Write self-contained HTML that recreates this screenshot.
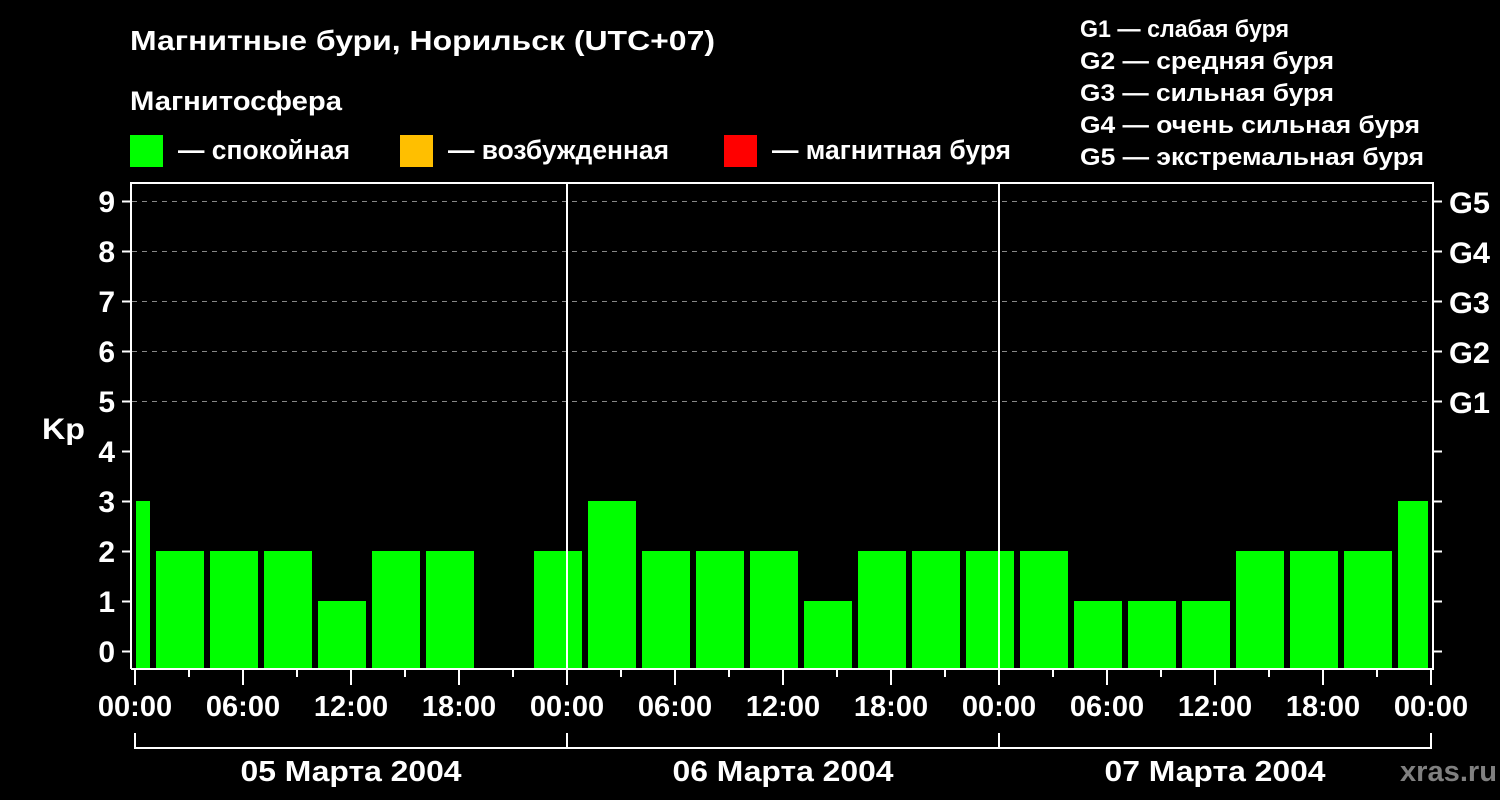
<!DOCTYPE html>
<html><head><meta charset="utf-8"><style>
html,body{margin:0;padding:0;background:#000;}
svg{display:block;font-family:"Liberation Sans","DejaVu Sans",sans-serif;font-weight:bold;}
</style></head><body>
<svg width="1500" height="800" viewBox="0 0 1500 800" xmlns="http://www.w3.org/2000/svg">
<rect width="1500" height="800" fill="#000"/>
<g fill="#fff">
<text x="130" y="50" font-size="28" textLength="585" lengthAdjust="spacingAndGlyphs">Магнитные бури, Норильск (UTC+07)</text>
<text x="130" y="110" font-size="27" textLength="212" lengthAdjust="spacingAndGlyphs">Магнитосфера</text>
<text x="178" y="159" font-size="27" textLength="172" lengthAdjust="spacingAndGlyphs">— спокойная</text>
<text x="448" y="159" font-size="27" textLength="221" lengthAdjust="spacingAndGlyphs">— возбужденная</text>
<text x="772" y="159" font-size="27" textLength="239" lengthAdjust="spacingAndGlyphs">— магнитная буря</text>
<g font-size="24">
<text x="1080" y="37" textLength="209" lengthAdjust="spacingAndGlyphs">G1 — слабая буря</text>
<text x="1080" y="69" textLength="254" lengthAdjust="spacingAndGlyphs">G2 — средняя буря</text>
<text x="1080" y="101" textLength="254" lengthAdjust="spacingAndGlyphs">G3 — сильная буря</text>
<text x="1080" y="133" textLength="340" lengthAdjust="spacingAndGlyphs">G4 — очень сильная буря</text>
<text x="1080" y="165" textLength="344" lengthAdjust="spacingAndGlyphs">G5 — экстремальная буря</text>
</g>
</g>
<rect x="130" y="135" width="33" height="32" fill="#00ff00"/>
<rect x="400" y="135" width="33" height="32" fill="#ffbf00"/>
<rect x="724" y="135" width="33" height="32" fill="#ff0000"/>

<g stroke="#888" stroke-width="1" stroke-dasharray="5,5">
<line x1="132" y1="201.5" x2="1432" y2="201.5"/>
<line x1="132" y1="251.5" x2="1432" y2="251.5"/>
<line x1="132" y1="301.5" x2="1432" y2="301.5"/>
<line x1="132" y1="351.5" x2="1432" y2="351.5"/>
<line x1="132" y1="401.5" x2="1432" y2="401.5"/>
</g>

<g fill="#00ff00">
<rect x="136" y="501" width="14" height="167"/>
<rect x="156" y="551" width="48" height="117"/>
<rect x="210" y="551" width="48" height="117"/>
<rect x="264" y="551" width="48" height="117"/>
<rect x="318" y="601" width="48" height="67"/>
<rect x="372" y="551" width="48" height="117"/>
<rect x="426" y="551" width="48" height="117"/>
<rect x="534" y="551" width="48" height="117"/>
<rect x="588" y="501" width="48" height="167"/>
<rect x="642" y="551" width="48" height="117"/>
<rect x="696" y="551" width="48" height="117"/>
<rect x="750" y="551" width="48" height="117"/>
<rect x="804" y="601" width="48" height="67"/>
<rect x="858" y="551" width="48" height="117"/>
<rect x="912" y="551" width="48" height="117"/>
<rect x="966" y="551" width="48" height="117"/>
<rect x="1020" y="551" width="48" height="117"/>
<rect x="1074" y="601" width="48" height="67"/>
<rect x="1128" y="601" width="48" height="67"/>
<rect x="1182" y="601" width="48" height="67"/>
<rect x="1236" y="551" width="48" height="117"/>
<rect x="1290" y="551" width="48" height="117"/>
<rect x="1344" y="551" width="48" height="117"/>
<rect x="1398" y="501" width="30" height="167"/>
</g>

<g stroke="#fff" stroke-width="2" fill="none">
<path d="M131 669 V183 H1433 V669 H131"/>
<line x1="567" y1="183" x2="567" y2="668"/>
<line x1="999" y1="183" x2="999" y2="668"/>
</g>
<g stroke="#fff" stroke-width="2">
<line x1="122" y1="201.5" x2="131" y2="201.5"/><line x1="122" y1="251.5" x2="131" y2="251.5"/>
<line x1="122" y1="301.5" x2="131" y2="301.5"/><line x1="122" y1="351.5" x2="131" y2="351.5"/>
<line x1="122" y1="401.5" x2="131" y2="401.5"/><line x1="122" y1="451.5" x2="131" y2="451.5"/>
<line x1="122" y1="501.5" x2="131" y2="501.5"/><line x1="122" y1="551.5" x2="131" y2="551.5"/>
<line x1="122" y1="601.5" x2="131" y2="601.5"/><line x1="122" y1="651.5" x2="131" y2="651.5"/>
<line x1="1433" y1="201.5" x2="1442" y2="201.5"/><line x1="1433" y1="251.5" x2="1442" y2="251.5"/>
<line x1="1433" y1="301.5" x2="1442" y2="301.5"/><line x1="1433" y1="351.5" x2="1442" y2="351.5"/>
<line x1="1433" y1="401.5" x2="1442" y2="401.5"/><line x1="1433" y1="451.5" x2="1442" y2="451.5"/>
<line x1="1433" y1="501.5" x2="1442" y2="501.5"/><line x1="1433" y1="551.5" x2="1442" y2="551.5"/>
<line x1="1433" y1="601.5" x2="1442" y2="601.5"/><line x1="1433" y1="651.5" x2="1442" y2="651.5"/>
<line x1="135" y1="669" x2="135" y2="685"/><line x1="243" y1="669" x2="243" y2="685"/>
<line x1="351" y1="669" x2="351" y2="685"/><line x1="459" y1="669" x2="459" y2="685"/>
<line x1="567" y1="669" x2="567" y2="685"/><line x1="675" y1="669" x2="675" y2="685"/>
<line x1="783" y1="669" x2="783" y2="685"/><line x1="891" y1="669" x2="891" y2="685"/>
<line x1="999" y1="669" x2="999" y2="685"/><line x1="1107" y1="669" x2="1107" y2="685"/>
<line x1="1215" y1="669" x2="1215" y2="685"/><line x1="1323" y1="669" x2="1323" y2="685"/>
<line x1="1431" y1="669" x2="1431" y2="685"/>
<line x1="189" y1="669" x2="189" y2="677"/><line x1="297" y1="669" x2="297" y2="677"/>
<line x1="405" y1="669" x2="405" y2="677"/><line x1="513" y1="669" x2="513" y2="677"/>
<line x1="621" y1="669" x2="621" y2="677"/><line x1="729" y1="669" x2="729" y2="677"/>
<line x1="837" y1="669" x2="837" y2="677"/><line x1="945" y1="669" x2="945" y2="677"/>
<line x1="1053" y1="669" x2="1053" y2="677"/><line x1="1161" y1="669" x2="1161" y2="677"/>
<line x1="1269" y1="669" x2="1269" y2="677"/><line x1="1377" y1="669" x2="1377" y2="677"/>
<path d="M135 733 V748 H1431 V733" fill="none"/>
<line x1="567" y1="733" x2="567" y2="748"/><line x1="999" y1="733" x2="999" y2="748"/>
</g>

<g fill="#fff" font-size="30" text-anchor="end">
<text x="115" y="212">9</text><text x="115" y="262">8</text><text x="115" y="312">7</text>
<text x="115" y="362">6</text><text x="115" y="412">5</text><text x="115" y="462">4</text>
<text x="115" y="512">3</text><text x="115" y="562">2</text><text x="115" y="612">1</text>
<text x="115" y="662">0</text>
</g>
<text x="42" y="439" fill="#fff" font-size="30" textLength="43" lengthAdjust="spacingAndGlyphs">Kp</text>
<g fill="#fff" font-size="30">
<text x="1449" y="213" textLength="41" lengthAdjust="spacingAndGlyphs">G5</text><text x="1449" y="263" textLength="41" lengthAdjust="spacingAndGlyphs">G4</text><text x="1449" y="313" textLength="41" lengthAdjust="spacingAndGlyphs">G3</text>
<text x="1449" y="363" textLength="41" lengthAdjust="spacingAndGlyphs">G2</text><text x="1449" y="413" textLength="41" lengthAdjust="spacingAndGlyphs">G1</text>
</g>
<g fill="#fff" font-size="29" text-anchor="middle">
<text x="135" y="716">00:00</text><text x="243" y="716">06:00</text><text x="351" y="716">12:00</text>
<text x="459" y="716">18:00</text><text x="567" y="716">00:00</text><text x="675" y="716">06:00</text>
<text x="783" y="716">12:00</text><text x="891" y="716">18:00</text><text x="999" y="716">00:00</text>
<text x="1107" y="716">06:00</text><text x="1215" y="716">12:00</text><text x="1323" y="716">18:00</text>
<text x="1431" y="716">00:00</text>
<text x="351" y="781" textLength="221" lengthAdjust="spacingAndGlyphs">05 Марта 2004</text>
<text x="783" y="781" textLength="221" lengthAdjust="spacingAndGlyphs">06 Марта 2004</text>
<text x="1215" y="781" textLength="221" lengthAdjust="spacingAndGlyphs">07 Марта 2004</text>
</g>
<text x="1400" y="781" fill="#808080" font-size="29" textLength="97" lengthAdjust="spacingAndGlyphs">xras.ru</text>
</svg>
</body></html>
